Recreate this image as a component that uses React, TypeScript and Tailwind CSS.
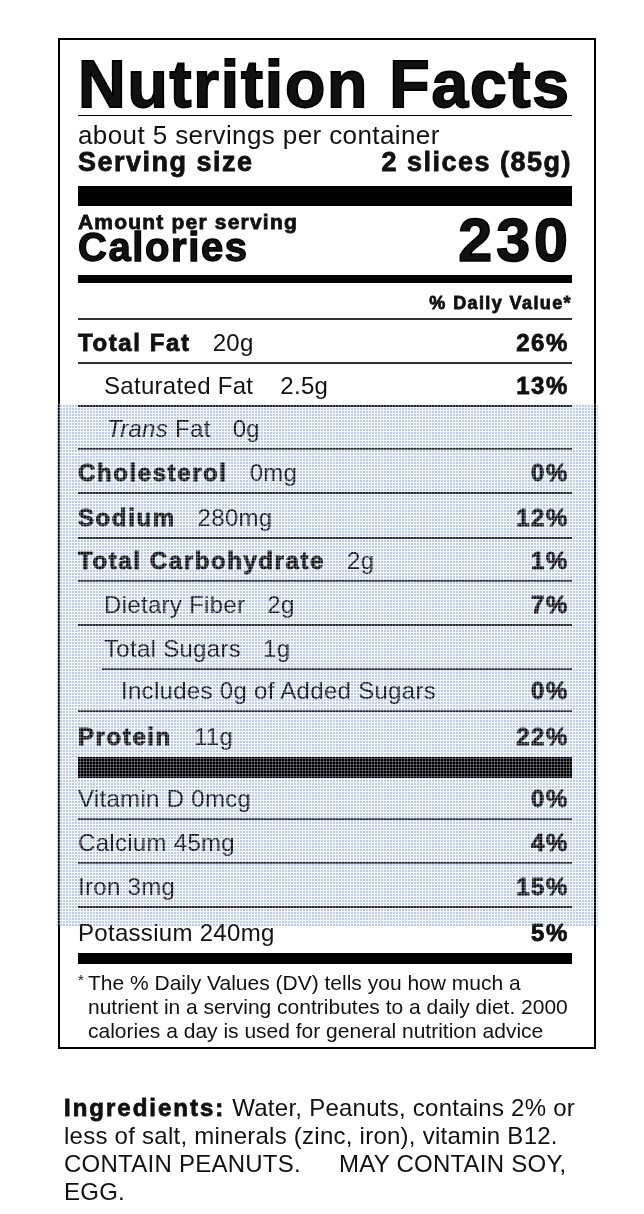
import React from "react";

type RowProps = { children: React.ReactNode; pct?: string; cls: string };

const heavy = "font-bold [-webkit-text-stroke:0.8px_currentColor]";

function Row({ children, pct, cls }: RowProps) {
  return (
    <div className={`flex items-end justify-between text-[24px] leading-[24px] ${cls}`}>
      <div className="flex items-end whitespace-nowrap">{children}</div>
      {pct ? (
        <span className={`mr-[3px] tracking-[1.6px] ${heavy}`}>{pct}</span>
      ) : null}
    </div>
  );
}

function Label({ children }: { children: React.ReactNode }) {
  return <span className={`tracking-[1.6px] ${heavy}`}>{children}</span>;
}

function Amt({ children }: { children: React.ReactNode }) {
  return <span className="ml-[22px] tracking-[0.3px]">{children}</span>;
}

export default function App() {
  return (
    <div className="min-h-[1214px] bg-white pt-[38px] font-['Liberation_Sans','Arial',sans-serif] text-[#111]">
      <div className="relative ml-[58px] w-[538px] border-2 border-black pb-[4px] pl-[18px] pr-[22px]">
        {/* Title */}
        <h1 className="whitespace-nowrap border-b border-black pt-[13px] text-[66px] font-bold leading-[62px] tracking-[1.8px] [-webkit-text-stroke:1.8px_black]">
          Nutrition Facts
        </h1>
        <div className="pt-[6px] text-[26px] leading-[26px] tracking-[0.4px] whitespace-nowrap">
          about 5 servings per container
        </div>
        <div className={`flex justify-between text-[27px] leading-[28px] tracking-[1.5px] whitespace-nowrap ${heavy}`}>
          <span>Serving size</span>
          <span>2 slices (85g)</span>
        </div>
        <div className="mt-[10px] h-[20px] bg-black" />

        {/* Calories */}
        <div className="flex items-end justify-between">
          <div>
            <div className={`mt-[7px] text-[21px] leading-[18px] tracking-[1.2px] ${heavy}`}>
              Amount per serving
            </div>
            <div className="mt-[1px] text-[40px] font-bold leading-[30px] tracking-[1.6px] [-webkit-text-stroke:1.3px_black]">
              Calories
            </div>
          </div>
          <div className="text-[61px] font-bold leading-[44px] tracking-[4px] [-webkit-text-stroke:1.6px_black]">
            230
          </div>
        </div>
        <div className="mt-[13px] h-[8px] bg-black" />

        <div className={`mt-[11px] border-b-2 border-[#333] pb-[6px] text-right text-[18px] leading-[18px] tracking-[1.4px] ${heavy}`}>
          % Daily Value*
        </div>

        {/* Nutrients */}
        <Row cls="h-[44px] pb-[7px] border-b-2 border-[#333]" pct="26%">
          <Label>Total Fat</Label>
          <Amt>20g</Amt>
        </Row>
        <Row cls="h-[43px] pb-[7px] border-b-2 border-[#333] pl-[26px]" pct="13%">
          <span className="tracking-[0.3px]">Saturated Fat</span>
          <span className="ml-[27px] tracking-[0.3px]">2.5g</span>
        </Row>
        <Row cls="h-[43px] pb-[7px] border-b-2 border-[#333] pl-[29px]">
          <span className="tracking-[0.3px]">
            <i>Trans</i> Fat
          </span>
          <Amt>0g</Amt>
        </Row>
        <Row cls="h-[44px] pb-[7px] border-b-2 border-[#333]" pct="0%">
          <Label>Cholesterol</Label>
          <Amt>0mg</Amt>
        </Row>
        <Row cls="h-[45px] pb-[7px] border-b-2 border-[#333]" pct="12%">
          <Label>Sodium</Label>
          <Amt>280mg</Amt>
        </Row>
        <Row cls="h-[43px] pb-[7px] border-b-2 border-[#333]" pct="1%">
          <Label>Total Carbohydrate</Label>
          <Amt>2g</Amt>
        </Row>
        <Row cls="h-[44px] pb-[7px] border-b-2 border-[#333] pl-[26px]" pct="7%">
          <span className="tracking-[0.3px]">Dietary Fiber</span>
          <Amt>2g</Amt>
        </Row>
        <Row cls="h-[44px] pb-[7px] border-b-2 border-[#333] ml-[24px] pl-[2px]">
          <span className="tracking-[0.3px]">Total Sugars</span>
          <Amt>1g</Amt>
        </Row>
        <Row cls="h-[42px] pb-[7px] border-b-2 border-[#333] pl-[43px]" pct="0%">
          <span className="tracking-[0.3px]">Includes 0g of Added Sugars</span>
        </Row>
        <Row cls="h-[45px] pb-[8px]" pct="22%">
          <Label>Protein</Label>
          <Amt>11g</Amt>
        </Row>
        <div className="h-[21px] bg-black" />

        <Row cls="h-[42px] pb-[7px] border-b-2 border-[#333]" pct="0%">
          <span className="tracking-[0.3px]">Vitamin D 0mcg</span>
        </Row>
        <Row cls="h-[44px] pb-[7px] border-b-2 border-[#333]" pct="4%">
          <span className="tracking-[0.3px]">Calcium 45mg</span>
        </Row>
        <Row cls="h-[44px] pb-[7px] border-b-2 border-[#333]" pct="15%">
          <span className="tracking-[0.3px]">Iron 3mg</span>
        </Row>
        <Row cls="h-[45px] pb-[8px]" pct="5%">
          <span className="tracking-[0.3px]">Potassium 240mg</span>
        </Row>
        <div className="h-[11px] bg-black" />

        {/* Footnote */}
        <div className="mt-[7px] flex text-[21px] leading-[24px] whitespace-nowrap">
          <span className="w-[10px] text-[15px] leading-[18px]">*</span>
          <p>
            The % Daily Values (DV) tells you how much a
            <br />
            nutrient in a serving contributes to a daily diet. 2000
            <br />
            calories a day is used for general nutrition advice
          </p>
        </div>

        {/* highlight overlay: blue dot screen */}
        <div className="pointer-events-none absolute -left-[4px] -right-[4px] top-[364px] h-[522px] bg-[#bccdec] bg-[linear-gradient(90deg,#ffffff_1px,transparent_1px),linear-gradient(#ffffff_1px,transparent_1px)] mix-blend-multiply [background-size:3px_3px]" />
        <div className="pointer-events-none absolute -left-[4px] -right-[4px] top-[364px] h-[522px] bg-[linear-gradient(90deg,rgba(230,236,250,0.3)_1px,transparent_1px),linear-gradient(rgba(230,236,250,0.3)_1px,transparent_1px)] [background-size:3px_3px]" />
      </div>

      {/* Ingredients */}
      <p className="ml-[64px] mt-[45px] whitespace-nowrap text-[24px] leading-[28px] tracking-[0.25px]">
        <span className={`tracking-[2px] ${heavy}`}>Ingredients:</span> Water, Peanuts, contains 2% or
        <br />
        less of salt, minerals (zinc, iron), vitamin B12.
        <br />
        CONTAIN PEANUTS.<span className="inline-block w-[38px]" />MAY CONTAIN SOY,
        <br />
        EGG.
      </p>
    </div>
  );
}
